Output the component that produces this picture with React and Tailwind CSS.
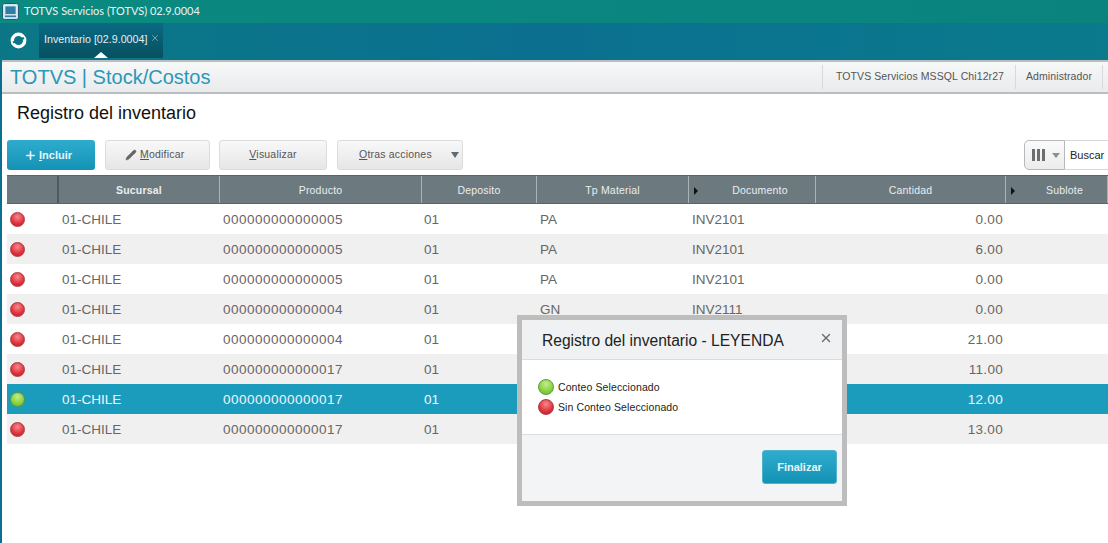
import React from "react";
import { Plus, Pencil, X } from "lucide-react";

const columns = [
  { label: "Sucursal", w: "w-[161px]", bold: true },
  { label: "Producto", w: "w-[202px]" },
  { label: "Deposito", w: "w-[115px]" },
  { label: "Tp Material", w: "w-[152px]" },
  { label: "Documento", w: "w-[127px]", arrow: true },
  { label: "Cantidad", w: "w-[190px]" },
  { label: "Sublote", w: "w-[102px]", arrow: true },
];

const rows = [
  { prod: "000000000000005", tp: "PA", doc: "INV2101", qty: "0.00" },
  { prod: "000000000000005", tp: "PA", doc: "INV2101", qty: "6.00" },
  { prod: "000000000000005", tp: "PA", doc: "INV2101", qty: "0.00" },
  { prod: "000000000000004", tp: "GN", doc: "INV2111", qty: "0.00" },
  { prod: "000000000000004", qty: "21.00" },
  { prod: "000000000000017", qty: "11.00" },
  { prod: "000000000000017", qty: "12.00", selected: true },
  { prod: "000000000000017", qty: "13.00" },
];

const Dot = ({ green, size = "w-[15px] h-[15px]" }) => (
  <span
    className={`block rounded-full border ${size} ${
      green
        ? "border-[#5d9a3a] bg-[radial-gradient(circle_at_50%_30%,#c4ec8e,#86d13f_60%,#6db52f)]"
        : "border-[#a83a42] bg-[radial-gradient(circle_at_50%_30%,#f58a8f,#e0303a_60%,#b9202c)]"
    }`}
  />
);

const Btn = ({ children, className }) => (
  <button
    className={`h-[30px] flex items-center justify-center whitespace-nowrap rounded-[3px] border border-[#dcdcdc] bg-gradient-to-b from-[#f8f8f8] to-[#e6e6e6] text-[10.5px] text-[#555] tracking-[0.2px] ${className}`}
  >
    {children}
  </button>
);

export default function App() {
  return (
    <div className="relative w-[1108px] h-[543px] overflow-hidden bg-white font-['Liberation_Sans',Arial,sans-serif]">
      {/* title bar */}
      <div className="h-[23px] flex items-center bg-gradient-to-r from-[#0a8a80] to-[#0a837f] text-[11px] text-[#e8f4f4]">
        <svg width="17" height="17" viewBox="0 0 17 17" className="ml-[2px]">
          <rect x="0.5" y="0.5" width="16" height="16" rx="2" fill="#cfe3ea" stroke="#1d5f7a" />
          <rect x="3" y="3" width="11" height="8.5" fill="#2f7ea6" stroke="#ffffff" strokeWidth="0.6" />
          <rect x="3" y="12.5" width="11" height="1.6" fill="#2f7ea6" />
        </svg>
        <span className="ml-[5px] font-['Lato',sans-serif]">TOTVS Servicios (TOTVS) 02.9.0004</span>
      </div>

      {/* module tabs */}
      <div className="h-[37px] flex bg-gradient-to-r from-[#0b7786] via-[#0b7090] to-[#0a7a8c]">
        <div className="w-[37px] h-[35px] flex items-center justify-center">
          <svg width="17" height="17" viewBox="0 0 17 17">
            <circle cx="8.5" cy="8.5" r="6.2" fill="none" stroke="#ffffff" strokeWidth="3.4" />
            <path d="M3 10.5 L14 6" stroke="#0b7389" strokeWidth="2.2" />
          </svg>
        </div>
        <div className="relative ml-[2px] w-[124px] h-[35px] flex items-center pl-[5px] bg-gradient-to-b from-[#0a6a84] to-[#07505f] text-[10.7px] text-[#e4eef2]">
          <span className="mb-[3px] whitespace-nowrap">Inventario [02.9.0004]</span>
          <X size={10} strokeWidth={1.5} className="ml-[3px] mb-[5px] text-[#b5ccd3]" />
          <span className="absolute left-[55px] bottom-0 w-0 h-0 border-x-[7px] border-x-transparent border-b-[6px] border-b-white" />
        </div>
      </div>

      <div className="pl-[2px] bg-[#0b7090]">
        <div className="bg-white h-[483px]">
          {/* app header */}
          <div className="h-[34px] flex items-center justify-between border-y-2 border-[#b9bec1] bg-gradient-to-b from-[#f7f8f8] to-[#e9ebec]">
            <span className="ml-[8px] text-[20px] text-[#2b97b8]">TOTVS | Stock/Costos</span>
            <div className="flex items-center h-[24px] mr-[5px] text-[10.5px] text-[#555] tracking-[0.1px]">
              <span className="w-[194px] h-full flex items-center justify-center pl-[2px] border-x border-[#d8dadb]">TOTVS Servicios MSSQL Chi12r27</span>
              <span className="w-[87px] h-full flex items-center justify-center border-r border-[#d8dadb]">Administrador</span>
            </div>
          </div>

          <h1 className="ml-[15px] mt-[7px] h-[24px] text-[18px] leading-[24px] text-[#111]">Registro del inventario</h1>

          {/* toolbar */}
          <div className="mt-[15px] ml-[5px] flex items-center h-[30px]">
            <button className="w-[88px] h-[30px] flex items-center pl-[17px] rounded-[3px] bg-gradient-to-b from-[#2eaccd] to-[#1392b5] text-[11px] font-bold text-[#e8f6fa]">
              <Plus size={13} strokeWidth={3} className="mr-[2px]" />
              <span><u>I</u>ncluir</span>
            </button>
            <Btn className="ml-[10px] w-[105px] justify-start pl-[19px]">
              <Pencil size={12} fill="#666" strokeWidth={1} className="mr-[3px] text-[#666]" />
              <span><u>M</u>odificar</span>
            </Btn>
            <Btn className="ml-[9px] w-[108px]">
              <span><u>V</u>isualizar</span>
            </Btn>
            <Btn className="ml-[10px] w-[126px] justify-start pl-[21px]">
              <span><u>O</u>tras acciones</span>
              <span className="ml-[19px] w-0 h-0 border-x-[4px] border-x-transparent border-t-[6px] border-t-[#5f6b73]" />
            </Btn>
            <div className="ml-auto flex items-center h-[30px]">
              <div className="w-[41px] h-[30px] flex items-center pl-[7px] gap-[2px] rounded-l-[5px] border border-[#b5b9bb] bg-gradient-to-b from-[#fafafa] to-[#ececec]">
                <span className="w-[3px] h-[12px] bg-[#6a6f72]" />
                <span className="w-[3px] h-[12px] bg-[#6a6f72]" />
                <span className="w-[3px] h-[12px] bg-[#6a6f72]" />
                <span className="ml-[5px] w-0 h-0 border-x-[4px] border-x-transparent border-t-[5px] border-t-[#8a9094]" />
              </div>
              <div className="w-[43px] h-[30px] pl-[5px] flex items-center border-y border-[#d5d7d8] text-[11px] text-[#222]">Buscar</div>
            </div>
          </div>

          {/* grid */}
          <div className="mt-[5px] ml-[5px]">
            <div className="flex h-[29px] bg-[#6c7a80] border-y border-[#596569]">
              <div className="w-[52px] shrink-0 border-r-2 border-[#4f5a5f]" />
              {columns.map((c) => (
                <div
                  key={c.label}
                  className={`${c.w} shrink-0 relative flex items-center justify-center pt-[2px] border-r border-[#a9b3b7] text-[10.5px] tracking-[0.2px] text-[#e9eef0] ${c.bold ? "font-bold" : ""} ${c.arrow ? "pl-[16px]" : ""}`}
                >
                  {c.arrow && (
                    <span className="absolute left-[5px] w-0 h-0 border-y-[4px] border-y-transparent border-l-[4px] border-l-[#111]" />
                  )}
                  {c.label}
                </div>
              ))}
            </div>
            {rows.map((r, i) => (
              <div
                key={i}
                className={`flex h-[30px] items-center text-[13.5px] ${
                  r.selected ? "bg-[#1c9cbd] text-[#eef8fb]" : i % 2 ? "bg-[#f0f0f0] text-[#666]" : "bg-white text-[#666]"
                }`}
              >
                <div className="w-[52px] shrink-0 pl-[3px]">
                  <Dot green={r.selected} />
                </div>
                <div className="w-[161px] shrink-0 pl-[3px] pt-[2px]">01-CHILE</div>
                <div className="w-[202px] shrink-0 pl-[3px] pt-[2px] tracking-[0.5px]">{r.prod}</div>
                <div className="w-[115px] shrink-0 pl-[2px] pt-[2px]">01</div>
                <div className="w-[152px] shrink-0 pl-[3px] pt-[2px]">{r.tp}</div>
                <div className="w-[127px] shrink-0 pl-[3px] pt-[2px]">{r.doc}</div>
                <div className="w-[190px] shrink-0 pr-[3px] pt-[2px] text-right tracking-[0.3px]">{r.qty}</div>
              </div>
            ))}
          </div>
        </div>
      </div>

      {/* legend dialog */}
      <div className="absolute left-[517px] top-[315px] w-[330px] h-[191px] border-[5px] border-[#bdbdbd] bg-white flex flex-col">
        <div className="h-[40px] flex items-center justify-between pl-[20px] pr-[9px] bg-[#f0f1f2] border-b border-[#dcdcdc]">
          <span className="pt-[2px] text-[15.6px] text-[#222]">Registro del inventario - LEYENDA</span>
          <X size={14} strokeWidth={2.5} className="mb-[4px] text-[#6b6f73]" />
        </div>
        <div className="h-[74px] pl-[16px] pt-[19px] flex flex-col gap-[4px] text-[10.5px] tracking-[0.1px] text-[#222]">
          <div className="flex items-center h-[16px] gap-[4px]"><Dot green size="w-[16px] h-[16px]" /><span className="pt-[2px]">Conteo Seleccionado</span></div>
          <div className="flex items-center h-[16px] gap-[4px]"><Dot size="w-[16px] h-[16px]" /><span className="pt-[2px]">Sin Conteo Seleccionado</span></div>
        </div>
        <div className="flex-1 flex items-start justify-end pr-[5px] pt-[15px] bg-[#f3f4f5] border-t border-[#dcdcdc]">
          <button className="w-[75px] h-[34px] rounded-[3px] border border-[#4fb2cd] bg-gradient-to-b from-[#2eaccd] to-[#1392b5] text-[11px] font-bold text-[#e8f6fa]">
            Finalizar
          </button>
        </div>
      </div>
    </div>
  );
}
